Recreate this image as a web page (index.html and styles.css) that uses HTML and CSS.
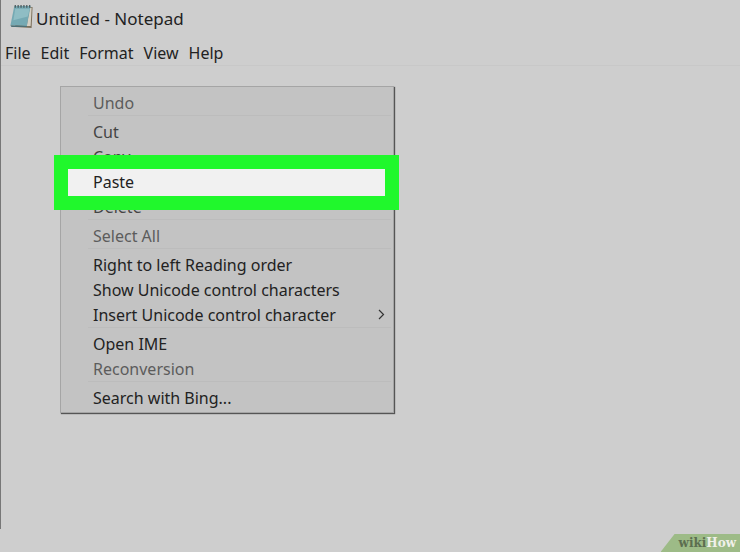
FILE: index.html
```
<!doctype html>
<html lang="en">
  <head>
    <meta charset="UTF-8" />
    <meta name="viewport" content="width=device-width, initial-scale=1.0" />
    <title>Untitled - Notepad</title>
    <link rel="stylesheet" href="styles.css">
  </head>
  <body>
    <div class="window">
      <header class="titlebar">
        <svg class="app-icon" width="24" height="25" viewBox="0 0 24 26" aria-hidden="true">
          <path d="M6 3 L23 3 L22 25 L5 24 Z" fill="#7d715d" />
          <path d="M20 4 L22 4 L21 23 L17 23 Z" fill="#d5d0c4" />
          <path d="M4 2 L21 2 L17 23 L0 22 Z" fill="#75a9b3" />
          <path d="M5 5 L20 5 L18 13 L3 17 Z" fill="#8fbdc4" />
          <path d="M0 22 L17 23 L17 24 L1 24 Z" fill="#4d6f76" />
          <path d="M5 4V1M8 4V1M11 4V1M14 4V1M17 4V1M20 4V1" stroke="#49575a" stroke-width="1.3" />
        </svg>
        <h1 class="title">Untitled - Notepad</h1>
      </header>
      <nav class="menubar">
        <button>File</button>
        <button>Edit</button>
        <button>Format</button>
        <button>View</button>
        <button>Help</button>
      </nav>
      <main class="editor">
        <div class="context-menu">
          <button class="item" disabled>Undo</button>
          <hr>
          <button class="item muted">Cut</button>
          <button class="item muted">Copy</button>
          <button class="item highlight">Paste</button>
          <button class="item muted">Delete</button>
          <hr>
          <button class="item" disabled>Select All</button>
          <hr>
          <button class="item">Right to left Reading order</button>
          <button class="item">Show Unicode control characters</button>
          <button class="item">
            Insert Unicode control character
            <svg class="arrow" width="7" height="11" viewBox="0 0 7 11" aria-hidden="true">
              <path d="M1 1 L5.5 5.5 L1 10" fill="none" stroke="#333" stroke-width="1.2" />
            </svg>
          </button>
          <hr>
          <button class="item">Open IME</button>
          <button class="item" disabled>Reconversion</button>
          <hr>
          <button class="item">Search with Bing...</button>
        </div>
      </main>
    </div>
    <div class="watermark"><span class="wiki">wiki</span>How</div>
  </body>
</html>
```

FILE: styles.css
```
body {
  margin: 0;
  min-height: 100vh;
  background-color: #cecece;
  color: #222;
  font-family: "Noto Sans", "Open Sans", sans-serif;
  font-size: 16px;
}

button {
  padding: 0;
  border: none;
  background: none;
  color: inherit;
  font: inherit;
}

.window {
  box-sizing: border-box;
  display: flex;
  flex-direction: column;
  min-height: calc(100vh - 23px);
  border-left: 1px solid #777;
}

.titlebar {
  display: flex;
  align-items: center;
  height: 37px;
  padding-left: 9px;
  gap: 2px;
}

.app-icon {
  margin-bottom: 4px;
}

.title {
  margin: 0;
  font-size: 17px;
  font-weight: normal;
}

.menubar {
  display: flex;
  align-items: center;
  gap: 10px;
  height: 29px;
  padding: 3px 4px 0;
  box-sizing: border-box;
  border-bottom: 1px solid #c8c8c8;
}

.editor {
  position: relative;
  flex: 1;
}

/* context menu */
.context-menu {
  position: absolute;
  top: 20px;
  left: 59px;
  display: flex;
  flex-direction: column;
  width: 332px;
  padding: 3px 0 2px;
  background-color: #c3c3c3;
  border: 1px solid #a5a5a5;
  box-shadow: 1px 1px 1px #555;
}

.context-menu hr {
  align-self: stretch;
  height: 1px;
  margin: 0 2px 3px 27px;
  border: none;
  background-color: #bcbcbc;
}

.item {
  display: flex;
  align-items: center;
  justify-content: space-between;
  height: 25px;
  padding: 0 8px 0 32px;
  text-align: left;
}

.item:disabled {
  color: #5c5c5c;
}

.muted {
  color: #444;
}

.highlight {
  position: relative;
  z-index: 1;
}

/* green frame round the highlighted item */
.highlight::before {
  content: "";
  position: absolute;
  z-index: -1;
  inset: -14px -6px -16px -7px;
  background-color: #f1f1f1;
  border: 14px solid #20f82c;
}

.watermark {
  position: absolute;
  right: 0;
  bottom: 0;
  height: 18px;
  padding: 0 4px 0 18px;
  background-color: #9dbb87;
  clip-path: polygon(14px 0, 100% 0, 100% 100%, 0 100%);
  color: #f0f0ea;
  font: bold 12px/18px "DejaVu Serif", serif;
}

.wiki {
  color: #5c6e50;
}
```
